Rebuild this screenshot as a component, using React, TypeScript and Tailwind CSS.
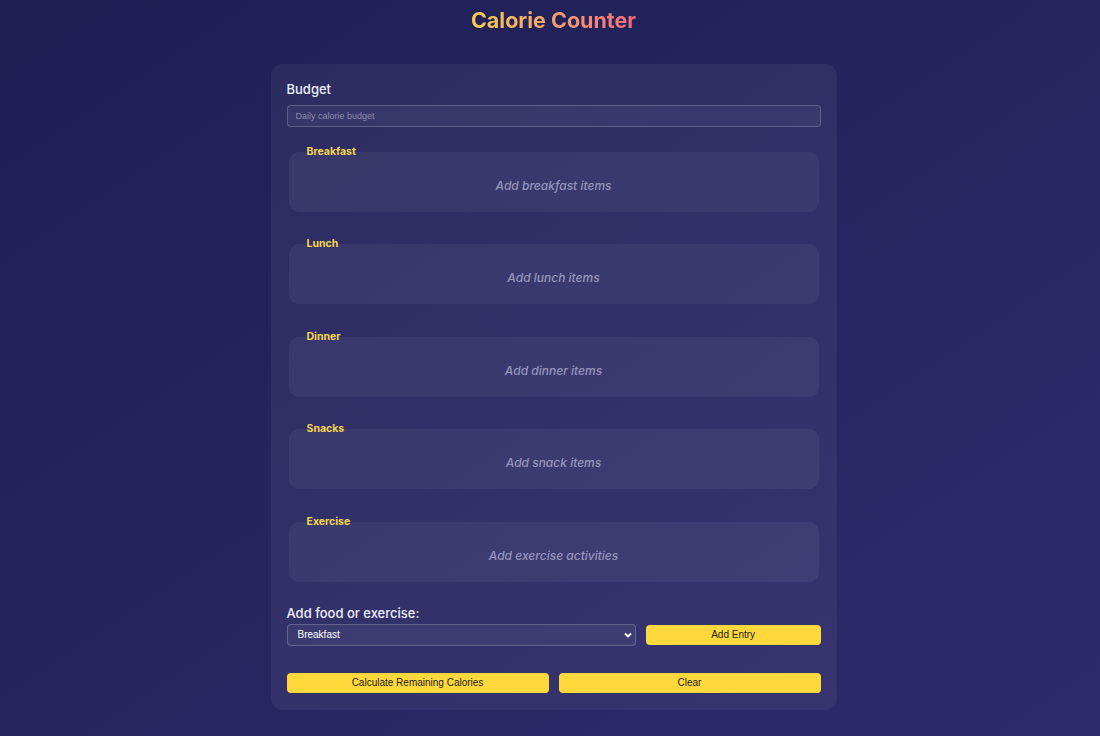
import { useState } from 'react'

const meals = [
  { name: 'Breakfast', hint: 'Add breakfast items' },
  { name: 'Lunch', hint: 'Add lunch items' },
  { name: 'Dinner', hint: 'Add dinner items' },
  { name: 'Snacks', hint: 'Add snack items' },
  { name: 'Exercise', hint: 'Add exercise activities' },
]

export default function App() {
  const [budget, setBudget] = useState('')
  const [kind, setKind] = useState('Breakfast')

  return (
    <div className="min-h-[736px] w-full bg-gradient-to-br from-[#1e1f55] to-[#2e2b6b] pl-[7px] font-['Inter',sans-serif] text-white">
      <h1 className="pt-[8px] text-center text-[21.5px] font-bold leading-[25px]">
        <span className="bg-gradient-to-r from-[#f7cf45] to-[#f1697c] bg-clip-text text-transparent">Calorie Counter</span>
      </h1>

      <div className="mx-auto mt-[31px] w-[566px] rounded-[12px] bg-white/[0.05] px-4 pb-[17px] pt-4">
        <label className="block text-[13px] font-medium leading-[18px] text-[#eeeef8]">Budget</label>
        <input
          value={budget}
          onChange={(e) => setBudget(e.target.value)}
          placeholder="Daily calorie budget"
          className="mt-[7px] block h-[22px] w-full rounded-[4px] border border-white/20 bg-white/[0.05] px-2 font-['Liberation_Sans',sans-serif] text-[9px] text-white outline-none placeholder:text-[#8d8cab]"
        />

        <div className="mt-[18px] flex flex-col gap-[25.4px]">
          {meals.map((m) => (
            <fieldset key={m.name} className="mx-[2px] rounded-[10px] bg-white/[0.05] px-4 pb-[16px] pt-[17px]">
              <legend className="px-[2px] text-[10.5px] font-bold leading-[14px] text-[#f6d54a]">{m.name}</legend>
              <p className="text-center text-[12px] font-medium italic leading-[20px] text-[#9896bb]">{m.hint}</p>
            </fieldset>
          ))}
        </div>

        <div className="mt-[23px]">
          <label className="block text-[13px] font-medium leading-[16px] text-[#eeeef8]">Add food or exercise:</label>
          <div className="mt-[3px] flex items-center gap-[10px]">
            <div className="relative flex-[2]">
              <select
                value={kind}
                onChange={(e) => setKind(e.target.value)}
                className="block h-[22px] w-full appearance-none rounded-[4px] border border-white/20 bg-white/[0.05] px-[10px] font-['Liberation_Sans',sans-serif] text-[10px] text-white outline-none"
              >
                {meals.map((m) => (
                  <option key={m.name} className="text-black">{m.name}</option>
                ))}
              </select>
              <svg className="pointer-events-none absolute right-[3px] top-[6px] h-[10px] w-[10px]" viewBox="0 0 10 10">
                <path d="M2 3.5 L5 6.5 L8 3.5" fill="none" stroke="#ffffff" strokeWidth="1.8" />
              </svg>
            </div>
            <button className="h-[20px] flex-1 rounded-[4px] bg-[#ffd83b] font-['Liberation_Sans',sans-serif] text-[10px] text-[#222]">Add Entry</button>
          </div>
        </div>

        <div className="mt-[27px] flex gap-[10px]">
          <button className="h-[20px] flex-1 rounded-[4px] bg-[#ffd83b] font-['Liberation_Sans',sans-serif] text-[10px] text-[#222]">Calculate Remaining Calories</button>
          <button className="h-[20px] flex-1 rounded-[4px] bg-[#ffd83b] font-['Liberation_Sans',sans-serif] text-[10px] text-[#222]">Clear</button>
        </div>
      </div>
    </div>
  )
}
